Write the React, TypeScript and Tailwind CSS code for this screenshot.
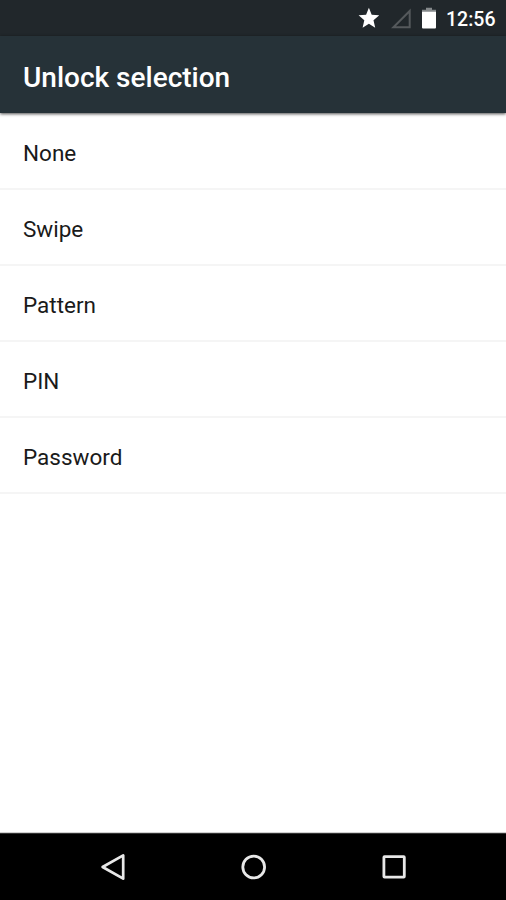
const options = ['None', 'Swipe', 'Pattern', 'PIN', 'Password']

function StatusBar() {
  return (
    <div className="flex h-9 shrink-0 items-center justify-end bg-[#21272b] pr-[11px] text-white">
      {/* Notification star */}
      <svg className="mr-3 h-9 w-[21px]" viewBox="0 0 21 36" fill="currentColor" aria-hidden="true">
        <path d="M10.9 7.8l2.8 6.9 7.5.6-5.7 5 1.7 7.5-6.3-4-6.3 4 1.7-7.5-5.7-5 7.5-.6z" />
      </svg>
      {/* No signal */}
      <svg className="mr-[11px] h-9 w-5" viewBox="0 0 20 36" fill="none" stroke="#55595c" strokeWidth="2" aria-hidden="true">
        <path d="M18.7 11v16.2H2.4z" />
      </svg>
      {/* Battery */}
      <svg className="mr-2.5 h-9 w-3.5" viewBox="0 0 14 36" aria-hidden="true">
        <path d="M4 7.8h6v2h4V12H0V9.800h4z" fill="#85898b" />
        <path d="M0 11.700h14V27.500a1 1 0 0 1-1 1H1a1 1 0 0 1-1-1z" fill="currentColor" />
      </svg>
      <span className="w-[49px] whitespace-nowrap pt-[3px] text-[19.5px] font-medium leading-none">12:56</span>
    </div>
  )
}

function NavigationBar() {
  return (
    <nav className="flex h-[68px] shrink-0 items-center justify-center gap-[112px] border-t border-[#d0d0d0] bg-black text-[#e8e8e8] shadow-[inset_0_1px_0_#333333]">
      <button type="button" aria-label="Back">
        <svg className="h-7 w-7" viewBox="0 0 28 28" fill="none" stroke="currentColor" strokeWidth="2.7" strokeLinejoin="round">
          <path d="M24.200 2.300v23.400L3.600 14z" />
        </svg>
      </button>
      <button type="button" aria-label="Home">
        <svg className="h-7 w-7" viewBox="0 0 28 28" fill="none" stroke="currentColor" strokeWidth="2.8">
          <circle cx="14.700" cy="14" r="10.900" />
        </svg>
      </button>
      <button type="button" aria-label="Recent apps">
        <svg className="h-7 w-7" viewBox="0 0 28 28" fill="none" stroke="currentColor" strokeWidth="2.8" strokeLinejoin="round">
          <rect x="4.900" y="3.700" width="20.400" height="20.400" rx="0.600" />
        </svg>
      </button>
    </nav>
  )
}

export default function App() {
  return (
    <div className="flex h-[900px] w-[506px] flex-col overflow-hidden bg-white font-[Roboto,sans-serif]">
      <StatusBar />
      <header className="z-10 flex h-[77px] shrink-0 items-center bg-[#263238] pl-[23px] pt-1.5 shadow-[0_1px_3px_rgba(0,0,0,0.7)]">
        <h1 className="whitespace-nowrap text-[28px] font-medium leading-none text-white">Unlock selection</h1>
      </header>
      <ul className="flex-1">
        {options.map((option) => (
          <li
            key={option}
            className="flex h-[76px] items-center border-b-2 border-[#f5f5f5] pl-[23px] pt-[5px] text-[22.5px] leading-none text-[#1a1a1a] first:h-[77px]"
          >
            {option}
          </li>
        ))}
      </ul>
      <NavigationBar />
    </div>
  )
}
